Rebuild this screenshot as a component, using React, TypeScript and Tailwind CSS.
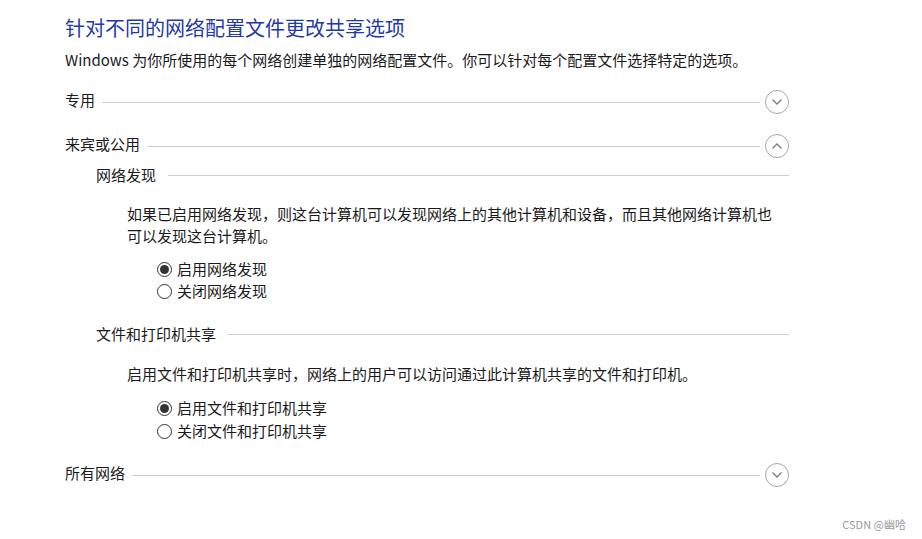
import React from 'react';

const font = { fontFamily: '"Noto Sans CJK SC", "Noto Sans", sans-serif' };

const Chevron: React.FC<{ up?: boolean }> = ({ up }) => (
  <div className="w-[24px] h-[24px] rounded-full border border-[#a6a6a6] flex items-center justify-center shrink-0 ml-[5px]">
    <svg width="12" height="8" viewBox="0 0 12 8" fill="none">
      {up ? (
        <path d="M1.5 6.5 L6 2 L10.5 6.5" stroke="#7a7a7a" strokeWidth="1.3" />
      ) : (
        <path d="M1.5 1.5 L6 6 L10.5 1.5" stroke="#7a7a7a" strokeWidth="1.3" />
      )}
    </svg>
  </div>
);

const Section: React.FC<{ title: string; up?: boolean; className?: string }> = ({ title, up, className }) => (
  <div className={`flex items-center h-[24px] ${className ?? ''}`}>
    <span className="text-[15px] leading-[22px] text-[#1a1a1a] mr-[7px] -translate-y-[2px]">{title}</span>
    <div className="flex-1 h-px bg-[#cfcfcf]" />
    <Chevron up={up} />
  </div>
);

const SubHeader: React.FC<{ title: string; className?: string }> = ({ title, className }) => (
  <div className={`flex items-center pl-[31px] h-[22px] ${className ?? ''}`}>
    <span className="text-[15px] leading-[22px] text-[#1a1a1a] mr-[12px]">{title}</span>
    <div className="flex-1 h-px bg-[#cfcfcf]" />
  </div>
);

const Radio: React.FC<{ checked?: boolean; label: string; className?: string }> = ({ checked, label, className }) => (
  <div className={`flex items-center pl-[92px] ${className ?? ''}`}>
    <div className="w-[15px] h-[15px] rounded-full border border-[#333] flex items-center justify-center mr-[5px]">
      {checked && <div className="w-[9px] h-[9px] rounded-full bg-[#333]" />}
    </div>
    <span className="text-[15px] leading-[22px] text-[#1a1a1a]">{label}</span>
  </div>
);

const App: React.FC = () => {
  return (
    <div className="relative w-[922px] h-[539px] bg-white overflow-hidden" style={font}>
      <div className="pl-[65px] pt-[14px] w-[789px] box-content">
        <h1 className="text-[20px] leading-[28px] text-[#1f3aa6] font-normal">针对不同的网络配置文件更改共享选项</h1>
        <p className="mt-[7px] text-[15px] leading-[22px] text-[#1a1a1a]">
          Windows 为你所使用的每个网络创建单独的网络配置文件。你可以针对每个配置文件选择特定的选项。
        </p>

        <div className="w-[724px]">
          <Section title="专用" className="mt-[19px]" />
          <Section title="来宾或公用" up className="mt-[20px]" />

          <SubHeader title="网络发现" className="mt-[6px]" />
          <p className="mt-[17px] pl-[62px] w-[712px] text-[15px] leading-[22px] text-[#1a1a1a]">
            如果已启用网络发现，则这台计算机可以发现网络上的其他计算机和设备，而且其他网络计算机也可以发现这台计算机。
          </p>
          <div className="mt-[11px]">
            <Radio checked label="启用网络发现" />
            <Radio label="关闭网络发现" />
          </div>

          <SubHeader title="文件和打印机共享" className="mt-[21px]" />
          <p className="mt-[18px] pl-[62px] text-[15px] leading-[22px] text-[#1a1a1a]">
            启用文件和打印机共享时，网络上的用户可以访问通过此计算机共享的文件和打印机。
          </p>
          <div className="mt-[12px] flex flex-col gap-[1px]">
            <Radio checked label="启用文件和打印机共享" />
            <Radio label="关闭文件和打印机共享" />
          </div>

          <Section title="所有网络" className="mt-[21px]" />
        </div>
      </div>

      <div className="absolute right-[16px] bottom-[8px] text-[11px] leading-[14px] text-[#9a9a9a]">CSDN @幽哈</div>
    </div>
  );
};

export default App;
